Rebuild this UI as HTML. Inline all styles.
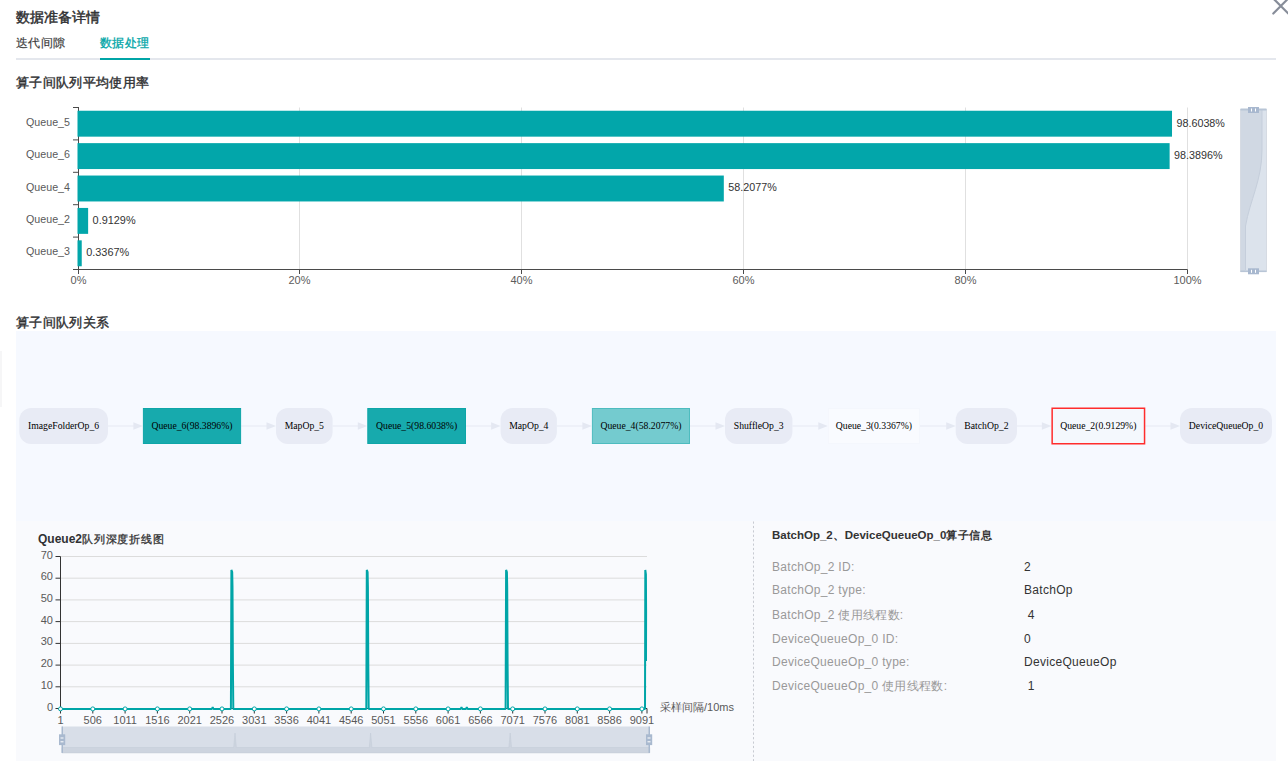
<!DOCTYPE html>
<html><head><meta charset="utf-8">
<style>
html,body{margin:0;padding:0;background:#fff;}
body{width:1288px;height:768px;overflow:hidden;position:relative;font-family:'Liberation Sans', sans-serif;}
.abs{position:absolute;white-space:nowrap;}
svg text{font-family:'Liberation Sans', sans-serif;}
</style></head><body>

<div class="abs" style="left:16px;top:7px;font-size:14px;font-weight:normal;-webkit-text-stroke:0.45px #303133;color:#303133;line-height:20px">数据准备详情</div>
<div class="abs" style="left:16px;top:35px;font-size:12px;letter-spacing:0.3px;color:#3a3a3a;-webkit-text-stroke:0.15px #3a3a3a;line-height:17px">迭代间隙</div>
<div class="abs" style="left:100px;top:35px;font-size:12px;letter-spacing:0.3px;color:#00a5a7;-webkit-text-stroke:0.3px #00a5a7;line-height:17px">数据处理</div>
<div class="abs" style="left:16px;top:58px;width:1260px;height:2px;background:#e4e7ed"></div>
<div class="abs" style="left:100px;top:58px;width:50px;height:2px;background:#00a5a7"></div>
<svg class="abs" style="left:1260px;top:0" width="28" height="20"><path d="M13.3 13.5 L28.3 -1.5 M13.3 -1.5 L28.3 13.5" stroke="#878d99" stroke-width="2.2" stroke-linecap="round" fill="none"/></svg>
<div class="abs" style="left:16px;top:74px;font-size:13px;letter-spacing:0.35px;font-weight:normal;-webkit-text-stroke:0.4px #303133;color:#303133;line-height:18px">算子间队列平均使用率</div>
<svg class="abs" style="left:0;top:0" width="1288" height="300"><line x1="299.5" y1="107.5" x2="299.5" y2="269.5" stroke="#e0e0e0" stroke-width="1"/><line x1="521.5" y1="107.5" x2="521.5" y2="269.5" stroke="#e0e0e0" stroke-width="1"/><line x1="743.5" y1="107.5" x2="743.5" y2="269.5" stroke="#e0e0e0" stroke-width="1"/><line x1="965.5" y1="107.5" x2="965.5" y2="269.5" stroke="#e0e0e0" stroke-width="1"/><line x1="1187.5" y1="107.5" x2="1187.5" y2="269.5" stroke="#e0e0e0" stroke-width="1"/><line x1="78.5" y1="107.0" x2="78.5" y2="269.5" stroke="#4a4a4a" stroke-width="1"/><line x1="73" y1="269.5" x2="1187.5" y2="269.5" stroke="#4a4a4a" stroke-width="1"/><line x1="73" y1="107.5" x2="78.5" y2="107.5" stroke="#4a4a4a" stroke-width="1"/><line x1="73" y1="139.9" x2="78.5" y2="139.9" stroke="#4a4a4a" stroke-width="1"/><line x1="73" y1="172.3" x2="78.5" y2="172.3" stroke="#4a4a4a" stroke-width="1"/><line x1="73" y1="204.7" x2="78.5" y2="204.7" stroke="#4a4a4a" stroke-width="1"/><line x1="73" y1="237.1" x2="78.5" y2="237.1" stroke="#4a4a4a" stroke-width="1"/><line x1="73" y1="269.5" x2="78.5" y2="269.5" stroke="#4a4a4a" stroke-width="1"/><line x1="78.5" y1="269.5" x2="78.5" y2="274.0" stroke="#4a4a4a" stroke-width="1"/><text x="78.5" y="284" text-anchor="middle" font-size="11" fill="#5c5c5c">0%</text><line x1="299.5" y1="269.5" x2="299.5" y2="274.0" stroke="#4a4a4a" stroke-width="1"/><text x="299.5" y="284" text-anchor="middle" font-size="11" fill="#5c5c5c">20%</text><line x1="521.5" y1="269.5" x2="521.5" y2="274.0" stroke="#4a4a4a" stroke-width="1"/><text x="521.5" y="284" text-anchor="middle" font-size="11" fill="#5c5c5c">40%</text><line x1="743.5" y1="269.5" x2="743.5" y2="274.0" stroke="#4a4a4a" stroke-width="1"/><text x="743.5" y="284" text-anchor="middle" font-size="11" fill="#5c5c5c">60%</text><line x1="965.5" y1="269.5" x2="965.5" y2="274.0" stroke="#4a4a4a" stroke-width="1"/><text x="965.5" y="284" text-anchor="middle" font-size="11" fill="#5c5c5c">80%</text><line x1="1187.5" y1="269.5" x2="1187.5" y2="274.0" stroke="#4a4a4a" stroke-width="1"/><text x="1187.5" y="284" text-anchor="middle" font-size="11" fill="#5c5c5c">100%</text><rect x="77.5" y="110.74" width="1094.51" height="25.92" fill="#02a6aa"/><text x="70" y="125.7" text-anchor="end" font-size="11" fill="#595959" textLength="44" lengthAdjust="spacingAndGlyphs">Queue_5</text><text x="1176.5" y="126.5" font-size="11.5" fill="#333" textLength="48.4" lengthAdjust="spacingAndGlyphs">98.6038%</text><rect x="77.5" y="143.14" width="1092.13" height="25.92" fill="#02a6aa"/><text x="70" y="158.1" text-anchor="end" font-size="11" fill="#595959" textLength="44" lengthAdjust="spacingAndGlyphs">Queue_6</text><text x="1174.1" y="158.9" font-size="11.5" fill="#333" textLength="48.4" lengthAdjust="spacingAndGlyphs">98.3896%</text><rect x="77.5" y="175.54" width="646.31" height="25.92" fill="#02a6aa"/><text x="70" y="190.5" text-anchor="end" font-size="11" fill="#595959" textLength="44" lengthAdjust="spacingAndGlyphs">Queue_4</text><text x="728.3" y="191.3" font-size="11.5" fill="#333" textLength="48.4" lengthAdjust="spacingAndGlyphs">58.2077%</text><rect x="77.5" y="207.94" width="10.63" height="25.92" fill="#02a6aa"/><text x="70" y="222.9" text-anchor="end" font-size="11" fill="#595959" textLength="44" lengthAdjust="spacingAndGlyphs">Queue_2</text><text x="92.6" y="223.7" font-size="11.5" fill="#333" textLength="43" lengthAdjust="spacingAndGlyphs">0.9129%</text><rect x="77.5" y="240.34" width="4.24" height="25.92" fill="#02a6aa"/><text x="70" y="255.3" text-anchor="end" font-size="11" fill="#595959" textLength="44" lengthAdjust="spacingAndGlyphs">Queue_3</text><text x="86.2" y="256.1" font-size="11.5" fill="#333" textLength="43" lengthAdjust="spacingAndGlyphs">0.3367%</text><rect x="1240.5" y="109.5" width="26" height="162" fill="#dce3ec" stroke="#d6dbe3" stroke-width="1"/><path d="M1241 110 L1262 110 L1262 150 C1262 180 1250 200 1245.5 226 L1245.5 271 L1241 271 Z" fill="#d0d8e3"/><path d="M1262 110 L1262 150 C1262 180 1250 200 1245.5 226 L1245.5 270" fill="none" stroke="#c5cedb" stroke-width="1"/><rect x="1240.5" y="108.5" width="26" height="2" fill="#b8c5d6"/><rect x="1240.5" y="270.5" width="26" height="1.6" fill="#b8c5d6"/><rect x="1248" y="107" width="11" height="6" fill="#a8b8cf"/><rect x="1251" y="108.5" width="1" height="3" fill="#fff"/><rect x="1255" y="108.5" width="1" height="3" fill="#fff"/><rect x="1248" y="268.3" width="11" height="6" fill="#a8b8cf"/><rect x="1251" y="269.8" width="1" height="3" fill="#fff"/><rect x="1255" y="269.8" width="1" height="3" fill="#fff"/></svg>
<div class="abs" style="left:0;top:351px;width:2px;height:56px;background:#f6f6f7"></div>
<div class="abs" style="left:16px;top:314px;font-size:13px;letter-spacing:0.35px;font-weight:normal;-webkit-text-stroke:0.4px #303133;color:#303133;line-height:18px">算子间队列关系</div>
<div class="abs" style="left:16px;top:331px;width:1260px;height:190px;background:#f6f9ff"></div>
<div class="abs" style="left:16px;top:521px;width:1260px;height:240px;background:#f9fafd"></div>
<svg class="abs" style="left:0;top:0" width="1288" height="768"><line x1="108" y1="426" x2="133.9" y2="426" stroke="#eaedf6" stroke-width="1.3"/><path d="M133.4 422.2 L142.9 426 L133.4 429.8 Z" fill="#e4e8f2"/><line x1="241.1" y1="426" x2="267" y2="426" stroke="#eaedf6" stroke-width="1.3"/><path d="M266.5 422.2 L276 426 L266.5 429.8 Z" fill="#e4e8f2"/><line x1="332.6" y1="426" x2="358.3" y2="426" stroke="#eaedf6" stroke-width="1.3"/><path d="M357.8 422.2 L367.3 426 L357.8 429.8 Z" fill="#e4e8f2"/><line x1="466" y1="426" x2="491.6" y2="426" stroke="#eaedf6" stroke-width="1.3"/><path d="M491.1 422.2 L500.6 426 L491.1 429.8 Z" fill="#e4e8f2"/><line x1="556.9" y1="426" x2="582.9" y2="426" stroke="#eaedf6" stroke-width="1.3"/><path d="M582.4 422.2 L591.9 426 L582.4 429.8 Z" fill="#e4e8f2"/><line x1="690" y1="426" x2="716" y2="426" stroke="#eaedf6" stroke-width="1.3"/><path d="M715.5 422.2 L725 426 L715.5 429.8 Z" fill="#e4e8f2"/><line x1="792.4" y1="426" x2="818.8" y2="426" stroke="#eaedf6" stroke-width="1.3"/><path d="M818.3 422.2 L827.8 426 L818.3 429.8 Z" fill="#e4e8f2"/><line x1="920" y1="426" x2="946.7" y2="426" stroke="#eaedf6" stroke-width="1.3"/><path d="M946.2 422.2 L955.7 426 L946.2 429.8 Z" fill="#e4e8f2"/><line x1="1017" y1="426" x2="1042.4" y2="426" stroke="#eaedf6" stroke-width="1.3"/><path d="M1041.9 422.2 L1051.4 426 L1041.9 429.8 Z" fill="#e4e8f2"/><line x1="1145.3" y1="426" x2="1171" y2="426" stroke="#eaedf6" stroke-width="1.3"/><path d="M1170.5 422.2 L1180 426 L1170.5 429.8 Z" fill="#e4e8f2"/><rect x="19.3" y="408" width="88.7" height="36" rx="12" ry="12" fill="#e8ebf5"/><text x="63.6" y="428.5" text-anchor="middle" font-size="10" fill="#000" textLength="71.1" lengthAdjust="spacingAndGlyphs" style="font-family:'Liberation Serif', serif">ImageFolderOp_6</text><rect x="143.4" y="408.5" width="97.2" height="35" fill="#17aaad" stroke="#0ea6a8" stroke-width="1"/><text x="192.0" y="428.5" text-anchor="middle" font-size="10" fill="#000" textLength="81.1" lengthAdjust="spacingAndGlyphs" style="font-family:'Liberation Serif', serif">Queue_6(98.3896%)</text><rect x="276" y="408" width="56.6" height="36" rx="12" ry="12" fill="#e8ebf5"/><text x="304.3" y="428.5" text-anchor="middle" font-size="10" fill="#000" textLength="39.3" lengthAdjust="spacingAndGlyphs" style="font-family:'Liberation Serif', serif">MapOp_5</text><rect x="367.8" y="408.5" width="97.7" height="35" fill="#17aaad" stroke="#0ea6a8" stroke-width="1"/><text x="416.6" y="428.5" text-anchor="middle" font-size="10" fill="#000" textLength="81.1" lengthAdjust="spacingAndGlyphs" style="font-family:'Liberation Serif', serif">Queue_5(98.6038%)</text><rect x="500.6" y="408" width="56.3" height="36" rx="12" ry="12" fill="#e8ebf5"/><text x="528.8" y="428.5" text-anchor="middle" font-size="10" fill="#000" textLength="39.3" lengthAdjust="spacingAndGlyphs" style="font-family:'Liberation Serif', serif">MapOp_4</text><rect x="592.4" y="408.5" width="97.1" height="35" fill="#74cbcf" stroke="#4dbcbf" stroke-width="1"/><text x="641.0" y="428.5" text-anchor="middle" font-size="10" fill="#000" textLength="81.1" lengthAdjust="spacingAndGlyphs" style="font-family:'Liberation Serif', serif">Queue_4(58.2077%)</text><rect x="725" y="408" width="67.4" height="36" rx="12" ry="12" fill="#e8ebf5"/><text x="758.7" y="428.5" text-anchor="middle" font-size="10" fill="#000" textLength="49.9" lengthAdjust="spacingAndGlyphs" style="font-family:'Liberation Serif', serif">ShuffleOp_3</text><rect x="828.3" y="408.5" width="91.2" height="35" fill="#f9fbff" stroke="#f4f7fd" stroke-width="1"/><text x="873.9" y="428.5" text-anchor="middle" font-size="10" fill="#000" textLength="76.2" lengthAdjust="spacingAndGlyphs" style="font-family:'Liberation Serif', serif">Queue_3(0.3367%)</text><rect x="955.7" y="408" width="61.3" height="36" rx="12" ry="12" fill="#e8ebf5"/><text x="986.4" y="428.5" text-anchor="middle" font-size="10" fill="#000" textLength="44.2" lengthAdjust="spacingAndGlyphs" style="font-family:'Liberation Serif', serif">BatchOp_2</text><rect x="1052.15" y="408.25" width="92.4" height="35.5" fill="#f4f8fd" stroke="#ff2d2d" stroke-width="1.5"/><text x="1098.3" y="428.5" text-anchor="middle" font-size="10" fill="#000" textLength="76.2" lengthAdjust="spacingAndGlyphs" style="font-family:'Liberation Serif', serif">Queue_2(0.9129%)</text><rect x="1180" y="408" width="92.0" height="36" rx="12" ry="12" fill="#e8ebf5"/><text x="1226.0" y="428.5" text-anchor="middle" font-size="10" fill="#000" textLength="74.3" lengthAdjust="spacingAndGlyphs" style="font-family:'Liberation Serif', serif">DeviceQueueOp_0</text></svg>
<svg class="abs" style="left:0;top:0" width="1288" height="768"><line x1="60.5" y1="686.8" x2="647" y2="686.8" stroke="#dcdcdc" stroke-width="1"/><line x1="60.5" y1="665.1" x2="647" y2="665.1" stroke="#dcdcdc" stroke-width="1"/><line x1="60.5" y1="643.4" x2="647" y2="643.4" stroke="#dcdcdc" stroke-width="1"/><line x1="60.5" y1="621.6" x2="647" y2="621.6" stroke="#dcdcdc" stroke-width="1"/><line x1="60.5" y1="599.9" x2="647" y2="599.9" stroke="#dcdcdc" stroke-width="1"/><line x1="60.5" y1="578.2" x2="647" y2="578.2" stroke="#dcdcdc" stroke-width="1"/><line x1="60.5" y1="556.5" x2="647" y2="556.5" stroke="#dcdcdc" stroke-width="1"/><line x1="55.5" y1="708.5" x2="60.5" y2="708.5" stroke="#333" stroke-width="1"/><text x="53" y="710.5" text-anchor="end" font-size="11" fill="#595959">0</text><line x1="55.5" y1="686.8" x2="60.5" y2="686.8" stroke="#333" stroke-width="1"/><text x="53" y="688.8" text-anchor="end" font-size="11" fill="#595959">10</text><line x1="55.5" y1="665.1" x2="60.5" y2="665.1" stroke="#333" stroke-width="1"/><text x="53" y="667.1" text-anchor="end" font-size="11" fill="#595959">20</text><line x1="55.5" y1="643.4" x2="60.5" y2="643.4" stroke="#333" stroke-width="1"/><text x="53" y="645.4" text-anchor="end" font-size="11" fill="#595959">30</text><line x1="55.5" y1="621.6" x2="60.5" y2="621.6" stroke="#333" stroke-width="1"/><text x="53" y="623.6" text-anchor="end" font-size="11" fill="#595959">40</text><line x1="55.5" y1="599.9" x2="60.5" y2="599.9" stroke="#333" stroke-width="1"/><text x="53" y="601.9" text-anchor="end" font-size="11" fill="#595959">50</text><line x1="55.5" y1="578.2" x2="60.5" y2="578.2" stroke="#333" stroke-width="1"/><text x="53" y="580.2" text-anchor="end" font-size="11" fill="#595959">60</text><line x1="55.5" y1="556.5" x2="60.5" y2="556.5" stroke="#333" stroke-width="1"/><text x="53" y="558.5" text-anchor="end" font-size="11" fill="#595959">70</text><line x1="60.5" y1="556.5" x2="60.5" y2="708.5" stroke="#333" stroke-width="1"/><line x1="60.5" y1="708.5" x2="647" y2="708.5" stroke="#333" stroke-width="1"/><line x1="60.5" y1="708.5" x2="60.5" y2="713.5" stroke="#333" stroke-width="1"/><text x="60.5" y="724" text-anchor="middle" font-size="11" fill="#595959">1</text><line x1="92.8" y1="708.5" x2="92.8" y2="713.5" stroke="#333" stroke-width="1"/><text x="92.8" y="724" text-anchor="middle" font-size="11" fill="#595959">506</text><line x1="125.1" y1="708.5" x2="125.1" y2="713.5" stroke="#333" stroke-width="1"/><text x="125.1" y="724" text-anchor="middle" font-size="11" fill="#595959">1011</text><line x1="157.4" y1="708.5" x2="157.4" y2="713.5" stroke="#333" stroke-width="1"/><text x="157.4" y="724" text-anchor="middle" font-size="11" fill="#595959">1516</text><line x1="189.7" y1="708.5" x2="189.7" y2="713.5" stroke="#333" stroke-width="1"/><text x="189.7" y="724" text-anchor="middle" font-size="11" fill="#595959">2021</text><line x1="222.0" y1="708.5" x2="222.0" y2="713.5" stroke="#333" stroke-width="1"/><text x="222.0" y="724" text-anchor="middle" font-size="11" fill="#595959">2526</text><line x1="254.3" y1="708.5" x2="254.3" y2="713.5" stroke="#333" stroke-width="1"/><text x="254.3" y="724" text-anchor="middle" font-size="11" fill="#595959">3031</text><line x1="286.6" y1="708.5" x2="286.6" y2="713.5" stroke="#333" stroke-width="1"/><text x="286.6" y="724" text-anchor="middle" font-size="11" fill="#595959">3536</text><line x1="318.9" y1="708.5" x2="318.9" y2="713.5" stroke="#333" stroke-width="1"/><text x="318.9" y="724" text-anchor="middle" font-size="11" fill="#595959">4041</text><line x1="351.2" y1="708.5" x2="351.2" y2="713.5" stroke="#333" stroke-width="1"/><text x="351.2" y="724" text-anchor="middle" font-size="11" fill="#595959">4546</text><line x1="383.5" y1="708.5" x2="383.5" y2="713.5" stroke="#333" stroke-width="1"/><text x="383.5" y="724" text-anchor="middle" font-size="11" fill="#595959">5051</text><line x1="415.8" y1="708.5" x2="415.8" y2="713.5" stroke="#333" stroke-width="1"/><text x="415.8" y="724" text-anchor="middle" font-size="11" fill="#595959">5556</text><line x1="448.1" y1="708.5" x2="448.1" y2="713.5" stroke="#333" stroke-width="1"/><text x="448.1" y="724" text-anchor="middle" font-size="11" fill="#595959">6061</text><line x1="480.4" y1="708.5" x2="480.4" y2="713.5" stroke="#333" stroke-width="1"/><text x="480.4" y="724" text-anchor="middle" font-size="11" fill="#595959">6566</text><line x1="512.7" y1="708.5" x2="512.7" y2="713.5" stroke="#333" stroke-width="1"/><text x="512.7" y="724" text-anchor="middle" font-size="11" fill="#595959">7071</text><line x1="545.0" y1="708.5" x2="545.0" y2="713.5" stroke="#333" stroke-width="1"/><text x="545.0" y="724" text-anchor="middle" font-size="11" fill="#595959">7576</text><line x1="577.3" y1="708.5" x2="577.3" y2="713.5" stroke="#333" stroke-width="1"/><text x="577.3" y="724" text-anchor="middle" font-size="11" fill="#595959">8081</text><line x1="609.6" y1="708.5" x2="609.6" y2="713.5" stroke="#333" stroke-width="1"/><text x="609.6" y="724" text-anchor="middle" font-size="11" fill="#595959">8586</text><line x1="641.9" y1="708.5" x2="641.9" y2="713.5" stroke="#333" stroke-width="1"/><text x="641.9" y="724" text-anchor="middle" font-size="11" fill="#595959">9091</text><line x1="647" y1="708.5" x2="647" y2="713.5" stroke="#333" stroke-width="1"/><text x="660" y="711" font-size="11" fill="#595959">采样间隔/10ms</text><path d="M60.5 708.9 L211.9 708.9 L212.7 707.3 L213.5 708.9 L230.9 708.9 L231.4 569.9 L232.2 572.1 L232.5 587.3 L232.9 665.5 L233.3 708.9 L366.3 708.9 L366.8 569.9 L367.6 572.1 L367.9 587.3 L368.3 665.5 L368.7 708.9 L460.7 708.9 L461.5 707.3 L462.3 708.9 L466.0 708.9 L466.8 707.3 L467.6 708.9 L505.6 708.9 L506.1 569.9 L506.9 572.1 L507.2 587.3 L507.6 665.5 L508.0 708.9 L645.0 708.9 L645.3 569.9 L645.9 574.3 L646.1 611.2 L646.0 661.1" fill="none" stroke="#00a5a7" stroke-width="2" stroke-linejoin="bevel"/><circle cx="60.5" cy="708.9" r="2" fill="#fff" stroke="#00a5a7" stroke-width="1"/><circle cx="92.8" cy="708.9" r="2" fill="#fff" stroke="#00a5a7" stroke-width="1"/><circle cx="125.1" cy="708.9" r="2" fill="#fff" stroke="#00a5a7" stroke-width="1"/><circle cx="157.4" cy="708.9" r="2" fill="#fff" stroke="#00a5a7" stroke-width="1"/><circle cx="189.7" cy="708.9" r="2" fill="#fff" stroke="#00a5a7" stroke-width="1"/><circle cx="222.0" cy="708.9" r="2" fill="#fff" stroke="#00a5a7" stroke-width="1"/><circle cx="254.3" cy="708.9" r="2" fill="#fff" stroke="#00a5a7" stroke-width="1"/><circle cx="286.6" cy="708.9" r="2" fill="#fff" stroke="#00a5a7" stroke-width="1"/><circle cx="318.9" cy="708.9" r="2" fill="#fff" stroke="#00a5a7" stroke-width="1"/><circle cx="351.2" cy="708.9" r="2" fill="#fff" stroke="#00a5a7" stroke-width="1"/><circle cx="383.5" cy="708.9" r="2" fill="#fff" stroke="#00a5a7" stroke-width="1"/><circle cx="415.8" cy="708.9" r="2" fill="#fff" stroke="#00a5a7" stroke-width="1"/><circle cx="448.1" cy="708.9" r="2" fill="#fff" stroke="#00a5a7" stroke-width="1"/><circle cx="480.4" cy="708.9" r="2" fill="#fff" stroke="#00a5a7" stroke-width="1"/><circle cx="512.7" cy="708.9" r="2" fill="#fff" stroke="#00a5a7" stroke-width="1"/><circle cx="545.0" cy="708.9" r="2" fill="#fff" stroke="#00a5a7" stroke-width="1"/><circle cx="577.3" cy="708.9" r="2" fill="#fff" stroke="#00a5a7" stroke-width="1"/><circle cx="609.6" cy="708.9" r="2" fill="#fff" stroke="#00a5a7" stroke-width="1"/><circle cx="641.9" cy="708.9" r="2" fill="#fff" stroke="#00a5a7" stroke-width="1"/><rect x="62" y="726.5" width="587.7" height="26.4" fill="#d8dee8"/><path d="M62 752.9 L62 747.5 L233.7 747.5 L235.0 733 L236.3 747.5 L369.3 747.5 L370.6 733 L371.9 747.5 L508.9 747.5 L510.2 733 L511.5 747.5 L649.7 747.5 L649.7 752.9 Z" fill="#cdd4df" stroke="#c5cdd9" stroke-width="0.6"/><rect x="61.5" y="726.5" width="1.5" height="26.4" fill="#a9b9cf"/><rect x="648.5" y="726.5" width="1.5" height="26.4" fill="#a9b9cf"/><rect x="59" y="734.3" width="6.2" height="10.8" fill="#a9b9cf"/><rect x="60.5" y="737.5" width="3" height="1" fill="#fff"/><rect x="60.5" y="741.3" width="3" height="1" fill="#fff"/><rect x="646" y="734.3" width="6.2" height="10.8" fill="#a9b9cf"/><rect x="647.5" y="737.5" width="3" height="1" fill="#fff"/><rect x="647.5" y="741.3" width="3" height="1" fill="#fff"/></svg>
<div class="abs" style="left:38px;top:531px;font-size:12px;font-weight:bold;color:#303133;line-height:17px">Queue2<span style="font-weight:normal;font-size:11px;letter-spacing:0.8px;color:#333;-webkit-text-stroke:0.3px #333">队列深度折线图</span></div>
<svg class="abs" style="left:753px;top:521px" width="2" height="240"><line x1="0.5" y1="0" x2="0.5" y2="240" stroke="#c8cbd2" stroke-width="1" stroke-dasharray="2.2 2.2" stroke-dashoffset="-0.5"/></svg>
<div class="abs" style="left:772px;top:527px;font-size:11.5px;font-weight:bold;color:#333;line-height:17px">BatchOp_2、DeviceQueueOp_0<span style="font-size:11px;letter-spacing:0.4px;margin-left:0px">算子信息</span></div>
<div class="abs" style="left:772px;top:560.1px;font-size:12px;letter-spacing:0.3px;color:#999;line-height:14px">BatchOp_2 ID:</div>
<div class="abs" style="left:1024px;top:560.1px;font-size:12px;letter-spacing:0.3px;color:#333;line-height:14px">2</div>
<div class="abs" style="left:772px;top:583.4px;font-size:12px;letter-spacing:0.3px;color:#999;line-height:14px">BatchOp_2 type:</div>
<div class="abs" style="left:1024px;top:583.4px;font-size:12px;letter-spacing:0.3px;color:#333;line-height:14px">BatchOp</div>
<div class="abs" style="left:772px;top:608.0px;font-size:12px;letter-spacing:0.3px;color:#999;line-height:14px">BatchOp_2 使用线程数:</div>
<div class="abs" style="left:1024px;top:608.0px;font-size:12px;letter-spacing:0.3px;color:#333;line-height:14px">&nbsp;4</div>
<div class="abs" style="left:772px;top:632.2px;font-size:12px;letter-spacing:0.3px;color:#999;line-height:14px">DeviceQueueOp_0 ID:</div>
<div class="abs" style="left:1024px;top:632.2px;font-size:12px;letter-spacing:0.3px;color:#333;line-height:14px">0</div>
<div class="abs" style="left:772px;top:654.8px;font-size:12px;letter-spacing:0.3px;color:#999;line-height:14px">DeviceQueueOp_0 type:</div>
<div class="abs" style="left:1024px;top:654.8px;font-size:12px;letter-spacing:0.3px;color:#333;line-height:14px">DeviceQueueOp</div>
<div class="abs" style="left:772px;top:679.4px;font-size:12px;letter-spacing:0.3px;color:#999;line-height:14px">DeviceQueueOp_0 使用线程数:</div>
<div class="abs" style="left:1024px;top:679.4px;font-size:12px;letter-spacing:0.3px;color:#333;line-height:14px">&nbsp;1</div>
</body></html>
